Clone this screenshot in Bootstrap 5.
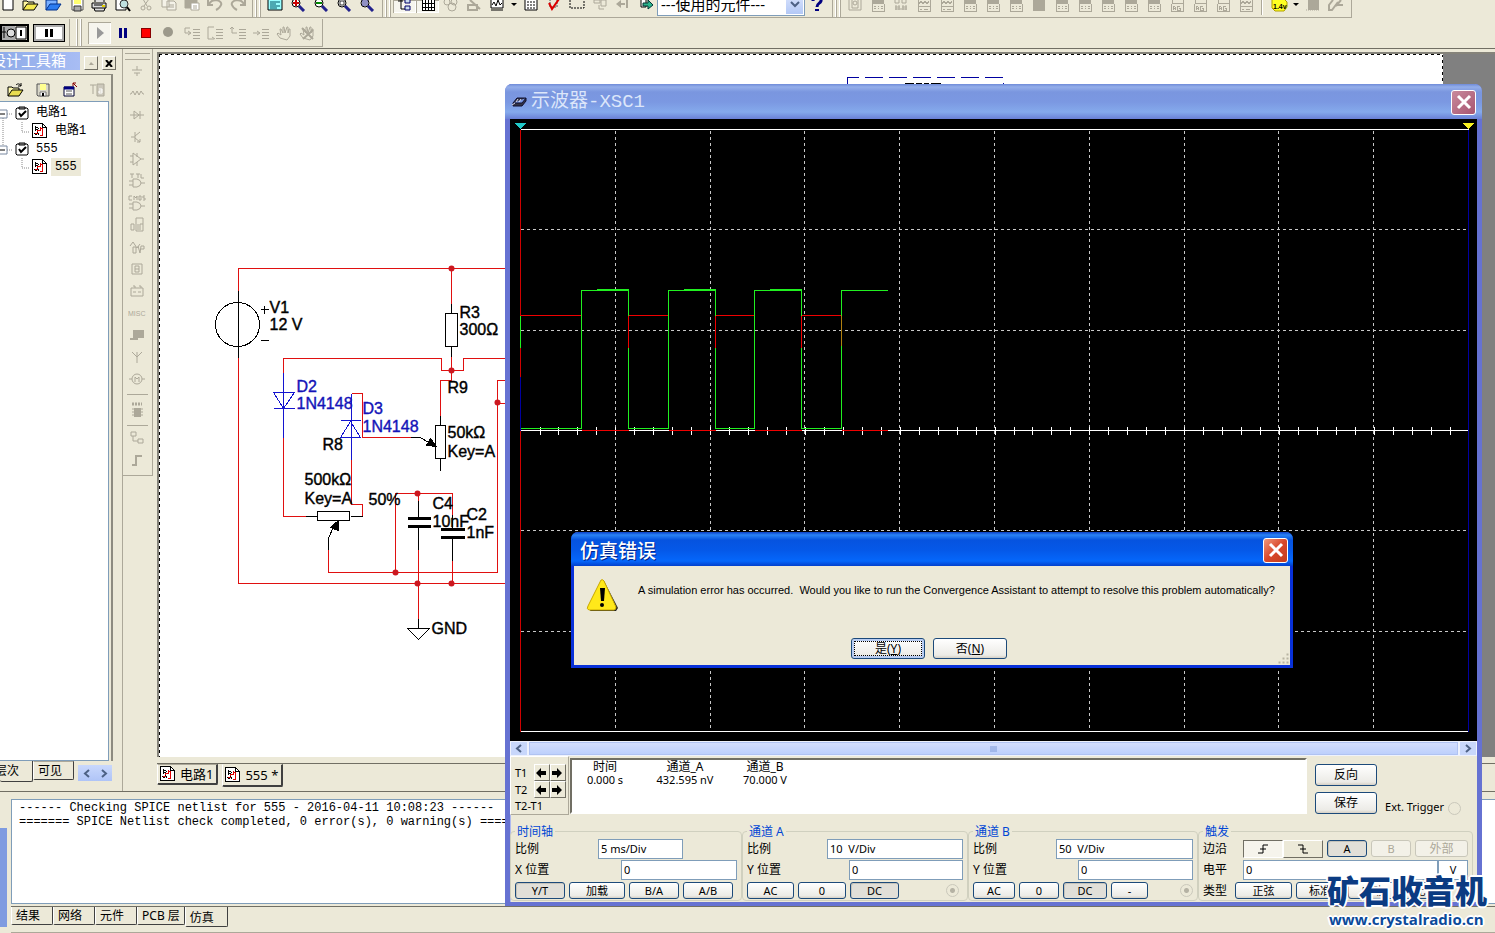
<!DOCTYPE html>
<html lang="zh-CN">
<head>
<meta charset="utf-8">
<meta name="viewport" content="width=device-width, initial-scale=1">
<title>555 - Multisim</title>
<link href="https://cdn.jsdelivr.net/npm/bootstrap@5.3.0/dist/css/bootstrap.min.css" rel="stylesheet">
<style>
:root{--face:#ece9d8;--dark:#716f64;--mid:#aca899;--field:#7f9db9;--ui:"Noto Sans","Noto Sans CJK SC",sans-serif;--song:"Liberation Mono","Noto Sans CJK SC",monospace}
body{height:100vh;overflow:hidden;background:var(--face);color:#000;font:12px/16px var(--ui)}
button,input,select{font:inherit;color:#000;border-radius:0}
svg{display:block;flex:none}
.strip-top{height:19px;overflow:hidden}
.strip-run{height:29px}
.bar{height:18px;border-right:1px solid var(--mid);border-bottom:1px solid var(--mid)}
.strip-run .bar{height:28px}
.bar-first{margin-left:-4px;padding-right:3px}
.grip{width:10px;align-self:stretch;flex:none;background:linear-gradient(90deg,transparent 2px,#fff 2px 3px,var(--mid) 3px 4px,transparent 4px 6px,#fff 6px 7px,var(--mid) 7px 8px,transparent 8px)}
.tool{width:23px;height:22px;flex:none;padding:0;border:0;background:none;display:flex;justify-content:center;align-items:center}
.strip-top .tool{height:13px;align-items:flex-start}
.tool.down{background:#f6f5ee;box-shadow:inset 1px 1px var(--mid),inset -1px -1px #fff}
.caret-tiny{width:11px}
.off{color:var(--mid)}
.parts-pick{width:148px;height:26px;margin-top:-10px;border:1px solid var(--field);background:#fff}
.parts-pick select{appearance:none;border:0;background:none;font:15px/22px var(--ui);padding:2px 3px 0;min-width:0}
.drop{width:17px;background:linear-gradient(#dfe8fe,#b3c8f6);margin:1px}
.vline{width:2px;height:15px;background:linear-gradient(90deg,var(--mid) 1px,#fff 1px)}
.toggle-box{height:18px;border:2px solid #000;background:#d4d0c8;padding:0}
.toggle-box.pause{width:32px;border-width:1px;box-shadow:inset 0 0 0 2px #aaa;background:#fff}
.main-area{border-top:1px solid var(--dark);min-height:0}
.dock{width:123px;border-right:1px solid var(--mid);padding-top:3px}
.dock-title{width:80px;height:18px;background:linear-gradient(90deg,#8fabe8,#a8bdf4);color:#fff;font-size:15px;line-height:17px;overflow:hidden;white-space:nowrap}
.dock-title span{margin-left:-9px}
.small-btn{width:14px;height:14px;padding:0;background:var(--face);border:1px solid;border-color:#fff var(--dark) var(--dark) #fff;display:flex;align-items:center;justify-content:center}
.dock-body{width:113px;border-right:2px solid #8d8b80;border-top:1px solid #8d8b80;margin-top:4px;padding-right:2px;min-height:0}
.tree{background:#fff;border:1px solid var(--field);border-left:0;padding-top:2px;font:12px/18px var(--song)}
.tree li{height:18px;display:flex;align-items:center;gap:3px}
.tree .picked{background:var(--face);padding:0 4px}
.dock-tabs{height:26px}
.dock-tabs,.doc-tabs,.out-tabs{font-size:12px}
.tabby{background:var(--face);border:1px solid;border-color:var(--mid) #404040 #404040 #fff;padding:0 6px;border-radius:0 0 2px 2px;white-space:nowrap;display:flex;align-items:center;gap:4px}
.scroller{width:34px;height:16px;background:linear-gradient(#c9d8fc,#afc4f7);border:0;padding:0}
.parts{width:30px;height:427px;border-right:1px solid var(--mid);border-bottom:1px solid var(--mid);padding-top:4px}
.parts .lines{height:7px;border-top:1px solid var(--mid);border-bottom:1px solid var(--mid);margin:0 2px}
.parts .tool{width:28px}
.parts hr{margin:1px 4px;opacity:1;color:var(--mid);border-top:1px solid}
.work{margin-left:4px;min-width:0}
.sheet-row{border-top:2px solid #85837a;border-left:2px solid #85837a;min-height:0;margin-top:3px}
.sheet{background:repeating-linear-gradient(90deg,#000 0 3px,#fff 3px 6px) top/100% 1px no-repeat,repeating-linear-gradient(#000 0 3px,#fff 3px 6px) left/1px 100% no-repeat,repeating-linear-gradient(#000 0 3px,#fff 3px 6px) right/1px 100% no-repeat,#fff;min-width:0;overflow:hidden}
.beyond{width:52px;background:#808080}
.doc-tabs{border-top:1px solid var(--dark);margin-top:6px;height:28px}
.doc-tabs .tabby{height:21px;font:13px/18px var(--ui);border-width:1px 2px 2px 1px;padding:0 3px 0 2px}
.doc-tabs .cur{height:23px;border-top-color:var(--face)}
.output{height:142px;border-top:1px solid var(--dark)}
.output .edge{width:7px;margin-top:36px;height:99px;background:#7f9be0}
.log{margin:7px 0 0 4px;height:105px;border:1px solid var(--field);border-right:0;background:#fff;padding:1px 7px;font:12px/14px var(--song);white-space:pre;overflow:hidden}
.out-tabs{border-top:1px solid var(--dark);margin:2px 0 0 4px;height:27px;border-bottom:1px solid var(--mid)}
.out-tabs .tabby{height:18px;padding:0 12px 0 4px;border-top:0}
.out-tabs .cur{height:20px;padding:3px 13px 0 4px}
.out-tabs .tight{padding-right:4px}
svg text{font-family:"Liberation Sans",Arial,sans-serif;font-size:16px}
.marks text{stroke-width:.4px}
.scope{position:absolute;left:505px;top:84px;width:977px;height:822px;border:5px solid #6672d2;border-top:0;border-bottom-width:4px;border-radius:7px 7px 0 0;background:var(--face);box-shadow:inset 1px 0 #aeb9ef}
.scope-title{height:35px;margin:0 -5px;padding:1px 6px 0 6px;border-radius:7px 7px 0 0;background:linear-gradient(#6f8bd8,#94aeea 3px,#7a96df 8px,#7b98e2 18px,#85aaec 28px,#6a80d6);color:#dce6fa;font:19px/34px var(--song)}
.xp-close{width:25px;height:25px;border:1px solid #fff;border-radius:3px;padding:0;display:flex;align-items:center;justify-content:center;background:linear-gradient(135deg,#c98a9c,#a75571)}
.xp-close.hot{background:linear-gradient(135deg,#f0977c,#d9482a 50%,#c33d1d)}
.screen{height:622px;background:#000;border:1px solid #000;overflow:hidden}
.hbar{height:15px;background:#eef2fd;padding:1px}
.hbar button{width:16px;border:0;padding:0;background:#c8d7fb;display:flex;align-items:center;justify-content:center}
.hbar .thumb{border:1px solid #b0c3f2;background:linear-gradient(#d3defe,#bdd0fc);margin:0 2px}
.cursor-box{width:59px;height:59px;border:1px solid;border-color:#fff var(--mid) var(--mid) #fff;padding:7px 2px 0 4px;font-size:11px}
.nudge{width:16px;height:17px;padding:0;background:var(--face);border:1px solid;border-color:#fff var(--dark) var(--dark) #fff}
.readout{height:56px;border:2px solid;border-color:var(--dark) #fff #fff var(--dark);background:#fff;margin:2px 0 0 1px}
.readout th,.readout td{width:66px;padding:0;font-weight:400;text-align:center;line-height:13px;font-size:11px;white-space:nowrap}
.readout th:nth-child(2){width:94px}
.readout th{font-size:12px}
.side-btns{padding-top:8px;margin-left:8px;gap:6px}
.xbtn{height:17px;padding:0;border:1px solid #1c4a7a;border-radius:3px;background:linear-gradient(#fff,#ecebe6 85%,#d6d0c5);font-size:11px;line-height:13px;text-align:center;white-space:nowrap;overflow:hidden;flex:none}
.xbtn.on{background:#e1dfd8;box-shadow:inset 1px 1px #c5c3ba}
.xbtn:disabled{border-color:#c9c7ba;color:var(--mid);background:#f3f1e8}
.xbtn.tall{height:22px;width:62px;font-size:12px;line-height:18px}
.ext-line{font-size:11px;padding:6px 16px 0 8px}
.group{border:1px solid #d0d0bf;border-radius:4px;padding:0 4px;margin:8px 0 0;height:70px;position:relative;min-width:0}
.group legend{position:absolute;top:-8px;left:4px;width:auto;float:none;margin:0;padding:0 2px;font-size:12px;line-height:16px;color:#0046d5;background:var(--face)}
.line{display:flex;align-items:center;height:21px}
.line:first-of-type{margin-top:6px}
.line label{width:83px;flex:none;white-space:nowrap}
.fieldy{height:20px;border:1px solid var(--field);background:#fff;padding:0 2px;font-size:11px;min-width:0}
.w-time{width:232px}.w-a{width:226px}.w-b{width:230px}
.w-a .line label{width:80px}
.dotty{appearance:none;width:13px;height:13px;border:1px solid #cac8bb;border-radius:50%;margin:0;flex:none}
.dotty:checked{background:radial-gradient(#b5b2a4 2px,transparent 3px)}
.edgebtn{width:40px;height:18px;padding:0;border:1px solid;border-color:#fff var(--dark) var(--dark) #fff;background:var(--face);display:flex;align-items:center;justify-content:center}
.edgebtn.on{border-color:var(--dark) #fff #fff var(--dark);background:#f6f4ec}
.alert-win{position:absolute;left:571px;top:532px;width:722px;height:136px;border:3px solid #0831d9;border-top:0;border-radius:7px 7px 0 0;background:var(--face);display:flex;flex-direction:column}
.alert-title{height:34px;margin:0 -3px;padding:2px 5px 0 9px;border-radius:7px 7px 0 0;background:linear-gradient(#0a3fc8,#2b83f5 3px,#0653df 8px,#0558e8 18px,#0567fb 29px,#0340cc);color:#fff;font:500 19px/30px "Noto Sans CJK SC",sans-serif;text-shadow:1px 1px #00248a}
.alert-msg{font:11px/16px "Liberation Sans",Arial,sans-serif;padding-left:18px;padding-top:16px;white-space:pre}
.alert-btns{padding:0 6px 6px 0}
.alert-win .xbtn{width:74px;height:21px;border-radius:3px;font-size:12px;line-height:18px}
.alert-win .focus{outline:1px dotted #000;outline-offset:-4px;box-shadow:inset 0 0 0 2px #b9cdf2}
.sitemark{position:absolute;left:1327px;top:867px;color:#0b3b82;white-space:nowrap;text-shadow:2px 0 #fff,-2px 0 #fff,0 2px #fff,0 -2px #fff,1px 1px #fff,-1px -1px #fff,1px -1px #fff,-1px 1px #fff}
.sitemark b{display:block;font:900 32px/44px "Noto Sans CJK SC",sans-serif}
.sitemark a{display:block;color:#0b4a9a;text-decoration:none;font:700 15px/17px "Open Sans",sans-serif;padding-left:2px}
</style>
</head>
<body class="d-flex flex-column">
<svg width="0" height="0" class="position-absolute" aria-hidden="true">
<defs>
<symbol id="folder" viewBox="0 0 17 16"><path d="M1 14V5h4l1 1h6v2" fill="#fffbb0" stroke="#000"/><path d="M1 14l4-6h11l-4 6z" fill="#e8dc50" stroke="#000"/><path d="M9 3c2-2 4-1 5 1m0-3v3h-3" fill="none" stroke="#000"/></symbol>
<symbol id="disk" viewBox="0 0 16 16"><path d="M2 2h12v12H3l-1-1z" fill="#d8d6c8" stroke="#555"/><path d="M5 2h6v6H5z" fill="#ffff90"/><path d="M5 10h6v4H5z" fill="#fff" stroke="#777"/><path d="M7 11h2v3H7z" fill="#000"/></symbol>
<symbol id="sheetic" viewBox="0 0 16 16"><g shape-rendering="crispEdges" transform="translate(.5 .5)"><path d="M0 0h10l4 4v10H0z" fill="#fff" stroke="#000"/><path d="M10 0v4h4" fill="none" stroke="#000"/><path d="M2 10h3V7h3V3M8 5h2v7H7" fill="none" stroke="#d00"/><path d="M3 3v4l3-2zM5 12l-3-2M5 9l2 3" fill="none" stroke="#000"/></g></symbol>
<symbol id="clip" viewBox="0 0 14 14"><path d="M2 2h10l1 1v9l-1 1H2l-1-1V3z" fill="#fff" stroke="#000"/><path d="M4 1h6v2H4z" fill="#999" stroke="#000"/><path d="M4 7l2 3 5-5" fill="none" stroke="#000" stroke-width="2"/></symbol>
<symbol id="cut-lens" viewBox="0 0 16 12"><circle cx="6" cy="3" r="4" fill="#fff" stroke="#000"/><path d="M9 6l5 5" stroke="#22228c" stroke-width="3"/></symbol>
<symbol id="meter" viewBox="0 0 16 12"><g shape-rendering="crispEdges"><path d="M2 0h12v4H2z" fill="#aca899"/><path d="M2 4v7h12V4M4 6h2m2 0h1m2 0h2M4 8h2m2 0h1m2 0h2" fill="none" stroke="#aca899"/></g></symbol>
<symbol id="graphm" viewBox="0 0 16 12"><g shape-rendering="crispEdges"><path d="M2 0v11h12V0M3 4l2-3 2 3 2-3 2 3 2-3M3 6h11M4 9h2m2 0h4" fill="none" stroke="#aca899"/></g></symbol>
<symbol id="agm" viewBox="0 0 16 12"><g shape-rendering="crispEdges"><path d="M3 0v3h11V0M2 4v7h12V4M4 10V7l1-1 1 1v3M4 8h2m5-2H8v4h3V8h-1" fill="none" stroke="#aca899"/></g></symbol>
<symbol id="lines" viewBox="0 0 18 16"><path shape-rendering="crispEdges" d="M10 4h7M10 7h7M10 10h7M10 13h7" stroke="#aca899"/></symbol>
<symbol id="lt" viewBox="0 0 8 9"><path d="M6 1L2 4.500L6 8" fill="none" stroke="#4d6185" stroke-width="2"/></symbol>
<symbol id="rt" viewBox="0 0 8 9"><path d="M2 1l4 3.500L2 8" fill="none" stroke="#4d6185" stroke-width="2"/></symbol>
<symbol id="ex" viewBox="0 0 16 16"><path d="M2 2l12 12M14 2L2 14" stroke="#fff" stroke-width="3"/></symbol>
<symbol id="al" viewBox="0 0 12 12"><path d="M1 6l5-5v3h5v4H6v3z"/></symbol>
<symbol id="ar" viewBox="0 0 12 12"><path d="M11 6L6 1v3H1v4h5v3z"/></symbol>
</defs>
</svg>

<header>
<div class="strip-top d-flex">
  <div class="bar bar-first d-flex">
    <button class="tool" aria-label="新建"><svg width="16" height="12"><path d="M3-1v11h10V-1z" fill="#fff" stroke="#000"/></svg></button>
    <button class="tool" aria-label="打开"><svg width="17" height="12"><path d="M1 10V1h4l1 1h6v2" fill="#fff8a0" stroke="#000"/><path d="M1 10l4-6h11l-4 6z" fill="#f5ea50" stroke="#000"/></svg></button>
    <button class="tool" aria-label="打开范例"><svg width="17" height="12"><path d="M1 10V0h11v4" fill="#7ab0ff" stroke="#00308c"/><path d="M1 10l4-6h11l-4 6z" fill="#2c7cf0" stroke="#00308c"/></svg></button>
    <button class="tool" aria-label="保存"><svg width="16" height="12"><path d="M3-1h11v11H3z" fill="#fff" stroke="#555"/><path d="M5 0h7v4H5z" fill="#ffff70"/><path d="M5 6h7v5H5z" fill="#aaa" stroke="#333"/></svg></button>
    <button class="tool" aria-label="打印"><svg width="17" height="12"><path d="M4 2V-1h9v3M1 3h14v5H1zM3 8l1 3h9l1-3" fill="#ddd" stroke="#000"/><path d="M3 5h9" stroke="#000"/><path d="M11 6h3" stroke="#e0d000" stroke-width="2"/></svg></button>
    <button class="tool" aria-label="打印预览"><svg width="16" height="12"><path d="M1-1v11h10V-1z" fill="#fff" stroke="#000"/><circle cx="9" cy="4" r="4" fill="#bfe0e0" stroke="#333"/><path d="M12 7l3 4" stroke="#000" stroke-width="2"/></svg></button>
    <button class="tool off" aria-label="剪切"><svg width="16" height="12" fill="none" stroke="currentColor"><path d="M5-1l4 7M11-1L6 6"/><circle cx="5" cy="8" r="2"/><circle cx="11" cy="8" r="2"/></svg></button>
    <button class="tool off" aria-label="复制"><svg width="16" height="12" fill="#f4f2e8" stroke="currentColor"><path d="M1-1v8h7V-1zM6 1v9h9V3l-2-2zM8 5h5M8 7h5"/></svg></button>
    <button class="tool off" aria-label="粘贴"><svg width="16" height="12" stroke="currentColor"><path d="M1-1v9h12v-9z" fill="currentColor"/><path d="M7 3v7h8V3z" fill="#fff"/><path d="M9 6h4M9 8h4"/></svg></button>
    <button class="tool off" aria-label="撤消"><svg width="16" height="12" fill="none" stroke="currentColor" stroke-width="2"><path d="M1 0v5h5M2 4c4-7 14-3 12 1-1 3-3 4-5 5"/></svg></button>
    <button class="tool off" aria-label="重做"><svg width="16" height="12" fill="none" stroke="currentColor" stroke-width="2"><path d="M15 0v5h-5M14 4C10-3 0 1 2 5c1 3 3 4 5 5"/></svg></button>
  </div>
  <div class="bar d-flex pe-1"><span class="grip"></span>
    <button class="tool" aria-label="整页"><svg width="16" height="12"><path d="M1-1v11h14V-1z" fill="#9ff" stroke="#000"/><path d="M3 2h10M3 4h6M3 6h10M3 8h7" stroke="#056"/></svg></button>
    <button class="tool" aria-label="放大"><svg width="16" height="12"><use href="#cut-lens"/><path d="M3 3h6M6 0v6" stroke="#c00" stroke-width="2"/></svg></button>
    <button class="tool" aria-label="缩小"><svg width="16" height="12"><use href="#cut-lens"/><path d="M3 3h6" stroke="#080" stroke-width="2"/></svg></button>
    <button class="tool" aria-label="缩放区域"><svg width="16" height="12"><use href="#cut-lens"/><path d="M4 1h4v4H4z" fill="none" stroke="#333"/></svg></button>
    <button class="tool" aria-label="缩放到页"><svg width="16" height="12"><use href="#cut-lens"/><path d="M4 0v6M6 0v6M8 0v6" stroke="#228"/></svg></button>
  </div>
  <div class="bar d-flex pe-1"><span class="grip"></span>
    <button class="tool down" aria-label="设计工具箱"><svg width="16" height="12" fill="none" stroke="#000"><path d="M1 1h5M4 0v9h4"/><path d="M8-1h5v4H8zM8 6h5v4H8z" fill="#cde" stroke="#006"/></svg></button>
    <button class="tool down" aria-label="电子表格"><svg width="16" height="12" shape-rendering="crispEdges"><path d="M2 0v10h12V0M2 3h12M2 7h12M5 0v10M8 0v10M11 0v10" fill="#fff" stroke="#000"/></svg></button>
    <button class="tool off" aria-label="数据库"><svg width="16" height="12" fill="none" stroke="currentColor"><circle cx="4" cy="2" r="3"/><circle cx="11" cy="2" r="3"/><circle cx="9" cy="7" r="4"/></svg></button>
    <button class="tool off" aria-label="新建元件"><svg width="16" height="12" fill="none" stroke="currentColor"><path d="M2 5h9v5H2zM4 0l10 9" stroke-width="2"/></svg></button>
    <button class="tool" aria-label="图形"><svg width="16" height="12"><path d="M2-1v9h12V-1z" fill="#fff" stroke="#000"/><path d="M3 5l2-3 2 4 2-6 2 5 2-2M2 10h12" fill="none" stroke="#000"/></svg></button>
    <button class="tool caret-tiny" aria-label="分析"><svg width="6" height="12"><path d="M0 3h6L3 6z"/></svg></button>
    <button class="tool" aria-label="后处理"><svg width="16" height="12"><path d="M2-1v11h12V-1z" fill="#fff" stroke="#000"/><path d="M4 2h8M4 5h8M4 8h8" stroke="#000" stroke-dasharray="2 1"/></svg></button>
    <button class="tool" aria-label="规则检查"><svg width="16" height="12"><path d="M4-1v8h7V-1" fill="none" stroke="#555" stroke-dasharray="2 1"/><path d="M3 3l3 6L13-1" fill="none" stroke="#d00" stroke-width="2"/></svg></button>
    <button class="tool" aria-label="捕捉区域"><svg width="16" height="12"><path d="M1 0v8h14V0" fill="none" stroke="#000" stroke-dasharray="2 1"/></svg></button>
    <button class="tool off" aria-label="转到父图"><svg width="16" height="12" fill="none" stroke="currentColor"><path d="M2 0h6v3H2zM9 0h5v6H9zM7 5v4h5"/></svg></button>
    <button class="tool off" aria-label="反注释"><svg width="16" height="12" fill="currentColor"><path d="M1 4l5-4v3h4v2H6v3zM11 0h2v8h-2z"/></svg></button>
    <button class="tool" aria-label="正注释"><svg width="16" height="12"><path d="M3-1v8h5V-1z" fill="#fff" stroke="#000"/><path d="M5 3h5V0l5 5-5 4V6H5z" fill="#2cb58c" stroke="#033"/></svg></button>
    <div class="parts-pick d-flex"><select class="flex-fill" aria-label="使用的元件"><option>---使用的元件---</option></select><span class="drop d-flex align-items-end justify-content-center pb-1"><svg width="10" height="9"><path d="M1 1l4 4 4-4" fill="none" stroke="#4d6185" stroke-width="2"/></svg></span></div>
    <button class="tool" aria-label="帮助"><svg width="16" height="12"><path d="M4 1c0-5 9-4 8 0-1 3-4 2-4 6" fill="none" stroke="#000080" stroke-width="3"/><path d="M6 9h4v2H6z" fill="#000080"/></svg></button>
  </div>
  <div class="bar d-flex"><span class="grip"></span>
    <button class="tool off" aria-label="万用表"><svg width="16" height="12" fill="none" stroke="currentColor"><path d="M2-1v11h12V-1M5 0v8h6V0"/><circle cx="8" cy="3" r="2"/></svg></button>
    <button class="tool" aria-label="函数发生器"><svg width="16" height="12"><use href="#meter"/></svg></button>
    <button class="tool off" aria-label="瓦特表"><svg width="16" height="12" fill="none" stroke="currentColor"><path d="M2-1v4h4V-1M9-1v4h4V-1M2 7h5M9 7h5M3 5v5M6 5v5M10 5v5M13 5v5M2 9h12"/></svg></button>
    <button class="tool" aria-label="示波器"><svg width="16" height="12"><use href="#graphm"/></svg></button>
    <button class="tool" aria-label="四通道示波器"><svg width="16" height="12"><use href="#graphm"/></svg></button>
    <button class="tool" aria-label="波特图仪"><svg width="16" height="12"><use href="#meter"/></svg></button>
    <button class="tool" aria-label="频率计"><svg width="16" height="12"><use href="#meter"/></svg></button>
    <button class="tool" aria-label="字发生器"><svg width="16" height="12"><use href="#meter"/></svg></button>
    <button class="tool off" aria-label="逻辑分析仪"><svg width="16" height="12"><path d="M2-1h12v12H2z" fill="currentColor"/></svg></button>
    <button class="tool" aria-label="逻辑转换仪"><svg width="16" height="12"><use href="#meter"/></svg></button>
    <button class="tool" aria-label="IV分析仪"><svg width="16" height="12"><use href="#meter"/></svg></button>
    <button class="tool" aria-label="失真分析仪"><svg width="16" height="12"><use href="#meter"/></svg></button>
    <button class="tool" aria-label="频谱分析仪"><svg width="16" height="12"><use href="#meter"/></svg></button>
    <button class="tool" aria-label="网络分析仪"><svg width="16" height="12"><use href="#meter"/></svg></button>
    <button class="tool" aria-label="安捷伦信号源"><svg width="16" height="12"><use href="#agm"/></svg></button>
    <button class="tool" aria-label="安捷伦万用表"><svg width="16" height="12"><use href="#agm"/></svg></button>
    <button class="tool" aria-label="安捷伦示波器"><svg width="16" height="12"><use href="#agm"/></svg></button>
    <button class="tool" aria-label="泰克示波器"><svg width="16" height="12"><use href="#graphm"/></svg></button>
    <span class="vline mx-1"></span>
    <button class="tool" aria-label="测量探针"><svg width="18" height="12"><path d="M2-1h12l3 3v5l-3 4H5L2 8z" fill="#ff2" stroke="#b0a000"/><text x="3" y="9" style="font-size:7px;font-weight:700">1.4v</text></svg></button>
    <button class="tool caret-tiny" aria-label="探针类型"><svg width="6" height="12"><path d="M0 3h6L3 6z"/></svg></button>
    <button class="tool off" aria-label="LabVIEW"><svg width="16" height="12"><path d="M3-1h11v11H3z" fill="currentColor"/><path d="M1 10h14" stroke="currentColor" stroke-dasharray="1 1"/></svg></button>
    <button class="tool off me-1" aria-label="电流探针"><svg width="17" height="12" fill="none" stroke="currentColor"><path d="M6 0L2 5v5h3l6-8M9 6l5-6M9 5h7" stroke-width="2"/></svg></button>
  </div>
</div>
<div class="strip-run d-flex">
  <div class="bar d-flex align-items-center pe-1 gap-1">
    <button class="toggle-box" aria-label="仿真开关"><svg width="25" height="14"><path d="M0 0h13v14H0z" fill="#aaa"/><path d="M2 1v11M0 6h4" stroke="#000"/><circle cx="9" cy="7" r="4" fill="#ddd" stroke="#000"/><path d="M14 1h10v12H14z" fill="#fff" stroke="#000"/><path d="M19 4v6" stroke="#000" stroke-width="2"/></svg></button>
    <button class="toggle-box pause d-flex align-items-center justify-content-center" aria-label="暂停仿真"><svg width="8" height="8"><path d="M0 0h3v8H0zM5 0h3v8H5z"/></svg></button>
  </div>
  <div class="bar d-flex align-items-center ps-1"><span class="grip me-1"></span>
    <button class="tool down" aria-label="运行"><svg width="10" height="12"><path d="M2 0l7 6-7 6z" fill="#999"/></svg></button>
    <button class="tool" aria-label="暂停"><svg width="8" height="10"><path d="M0 0h3v10H0zM5 0h3v10H5z" fill="#000080"/></svg></button>
    <button class="tool" aria-label="停止"><svg width="10" height="10"><path d="M0 0h10v10H0z" fill="#800"/><path d="M1 1h8v8H1z" fill="#f00"/></svg></button>
    <button class="tool" aria-label="断点"><svg width="11" height="11"><circle cx="5" cy="5" r="5" fill="#9c998b"/></svg></button>
    <button class="tool" aria-label="步入"><svg width="18" height="16"><use href="#lines"/><path d="M7 3H2v5h5M5 6l3 2-3 2" fill="none" stroke="#aca899"/></svg></button>
    <button class="tool" aria-label="步过"><svg width="18" height="16"><use href="#lines"/><path d="M8 2H2v12h6M6 12l3 2" fill="none" stroke="#aca899"/></svg></button>
    <button class="tool" aria-label="步出"><svg width="18" height="16"><use href="#lines"/><path d="M3 2v6h5M1 4l2-2 2 2" fill="none" stroke="#aca899"/></svg></button>
    <button class="tool" aria-label="运行到光标"><svg width="18" height="16"><use href="#lines"/><path d="M1 8h6M5 6l3 2-3 2" fill="none" stroke="#aca899"/></svg></button>
    <button class="tool off" aria-label="手动断点"><svg width="16" height="16" fill="none" stroke="currentColor"><path d="M4 13L1 9l1-1 3 2-1-6h1l2 4V2h1l1 6 2-6h1v6l1-4h1v7l-3 4z"/></svg></button>
    <button class="tool off me-1" aria-label="清除断点"><svg width="16" height="16" fill="none" stroke="currentColor"><path d="M4 13L1 9l1-1 3 2-1-6h1l2 4V2h1l1 6 2-6h1v6l1-4h1v7l-3 4z"/><path d="M3 3l11 11M14 5L4 14" stroke-width="2"/></svg></button>
  </div>
</div>
</header>

<main class="main-area d-flex flex-fill">
  <aside class="dock d-flex flex-column flex-shrink-0">
    <div class="d-flex"><div class="dock-title"><span>设计工具箱</span></div>
      <button class="small-btn ms-1 mt-1" aria-label="收起"><svg width="5" height="3"><path d="M0 3h5L2 0z" fill="#aca899"/></svg></button>
      <button class="small-btn ms-1 mt-1" aria-label="关闭"><svg width="8" height="7"><path d="M1 0l6 7M7 0L1 7" stroke="#000" stroke-width="2"/></svg></button></div>
    <div class="dock-body d-flex flex-column flex-fill">
      <div class="d-flex ps-1 pt-1 gap-1"><button class="tool" aria-label="打开"><svg width="17" height="16"><use href="#folder"/></svg></button><button class="tool" aria-label="保存"><svg width="16" height="16"><use href="#disk"/></svg></button><button class="tool" aria-label="关闭设计"><svg width="16" height="16"><path d="M2 5h10v9H2z" fill="#fff" stroke="#003"/><path d="M2 6h10" stroke="#000080" stroke-width="3"/><path d="M4 9h6M4 12h6" stroke="#555"/><path d="M15 5l-4-4m0 3V1h3" fill="none" stroke="#800"/></svg></button><button class="tool off" aria-label="重命名"><svg width="16" height="16" fill="none" stroke="currentColor"><path d="M1 3h6M4 3v9"/><path d="M8 2h7v12H8z" fill="#ccc8bb"/><path d="M10 7h3v4h-3V9h3" stroke="#fff"/></svg></button></div>
      <ul class="tree list-unstyled mb-0 flex-fill">
        <li><svg width="12" height="18"><path d="M3 14v4M7 10h5" stroke="#888" stroke-dasharray="1 1"/><path d="M-2 6h9v8h-9z" fill="#fff" stroke="#7888a0"/><path d="M0 10h5" stroke="#000"/></svg><svg width="14" height="14"><use href="#clip"/></svg><span class="ps-1">电路1</span></li>
        <li><svg width="29" height="18"><path d="M3 0v18M22 0v10h7" fill="none" stroke="#888" stroke-dasharray="1 1"/></svg><svg width="16" height="16"><use href="#sheetic"/></svg><span class="ps-1">电路1</span></li>
        <li><svg width="12" height="18"><path d="M3 0v6M7 10h5" stroke="#888" stroke-dasharray="1 1"/><path d="M-2 6h9v8h-9z" fill="#fff" stroke="#7888a0"/><path d="M0 10h5" stroke="#000"/></svg><svg width="14" height="14"><use href="#clip"/></svg><span class="ps-1">555</span></li>
        <li><svg width="29" height="18"><path d="M22 0v10h7" fill="none" stroke="#888" stroke-dasharray="1 1"/></svg><svg width="16" height="16"><use href="#sheetic"/></svg><span class="picked">555</span></li>
      </ul>
    </div>
    <div class="dock-tabs d-flex mb-1">
      <button class="tabby border-start-0 border-top-0 ps-0" style="width:33px;height:21px"><span style="margin-left:-5px">层次</span></button><button class="tabby mb-1 px-1" style="width:41px;height:19px">可见</button>
      <button class="scroller ms-1 mt-1 d-flex justify-content-around align-items-center" aria-label="滚动标签"><svg width="8" height="9"><use href="#lt"/></svg><svg width="8" height="9"><use href="#rt"/></svg></button>
    </div>
  </aside>
  <div class="parts flex-shrink-0">
    <div class="lines"></div>
    <button class="tool off" aria-label="电源"><svg width="14" height="12" fill="none" stroke="currentColor"><path d="M7 1v4M2 5h10M4 8h6M7 8v3"/></svg></button>
    <button class="tool off" aria-label="基本"><svg width="14" height="8" fill="none" stroke="currentColor"><path d="M0 5h1l2-3 2 4 2-4 2 4 2-4 2 3h1"/></svg></button>
    <button class="tool off" aria-label="二极管"><svg width="14" height="12" fill="none" stroke="currentColor"><path d="M0 6h14M4 2v8l5-4zM10 2v8"/></svg></button>
    <button class="tool off" aria-label="晶体管"><svg width="14" height="14" fill="none" stroke="currentColor"><path d="M1 7h4M5 2v10M5 6l5-4M5 8l5 4h-3m3 0V9"/></svg></button>
    <button class="tool off" aria-label="模拟"><svg width="16" height="14" fill="none" stroke="currentColor"><path d="M4 1v12l8-6zM1 4h3M1 10h3M12 7h3M8 1v4M8 10v4"/></svg></button>
    <button class="tool off" aria-label="TTL"><svg width="18" height="16" fill="none" stroke="currentColor"><path d="M2 1h4M4 1v4M8 1h4M10 1v4M13 1v4h3M5 6h4q4 1 4 4t-4 4H5zM1 8h4M1 12h4M13 10h4"/></svg></button>
    <button class="tool off" aria-label="CMOS"><svg width="18" height="16" fill="none" stroke="currentColor"><path d="M4 1H1v4h3M6 5V1l2 2 1-2v4M11 1h2v4h-2zM17 1h-2v2h2v2h-2M5 7h4q4 1 4 4t-4 4H5zM1 9h4M1 13h4M13 11h4"/></svg></button>
    <button class="tool off" aria-label="其他数字"><svg width="16" height="16" fill="none" stroke="currentColor"><path d="M7 1h7v13H7zM2 7h3v6H2zM9 7v6m2 0V7h3"/></svg></button>
    <button class="tool off" aria-label="混合"><svg width="16" height="14" fill="none" stroke="currentColor"><path d="M1 6l3-4 4 6 3-4M4 7h3v6H4zM9 6l2 7 1-7h3v3h-3"/></svg></button>
    <button class="tool off" aria-label="指示器"><svg width="12" height="12" fill="none" stroke="currentColor"><path d="M1 1h10v10H1zM4 3h4v6H4zM4 6h4"/></svg></button>
    <button class="tool off" aria-label="功率"><svg width="14" height="12" fill="none" stroke="currentColor"><path d="M1 3h12v8H1zM3 1h2v2M9 1h2v2M3 7h3M8 7h3"/></svg></button>
    <button class="tool off" aria-label="杂项"><svg width="18" height="8"><text x="0" y="7" fill="currentColor" style="font-size:7px">MISC</text></svg></button>
    <button class="tool off" aria-label="外设"><svg width="16" height="12"><path d="M4 1h11v8H4zM1 9h8v2H1z" fill="currentColor"/></svg></button>
    <button class="tool off" aria-label="射频"><svg width="12" height="12" fill="none" stroke="currentColor"><path d="M6 1v11M1 1l5 5 5-5"/></svg></button>
    <button class="tool off" aria-label="机电"><svg width="16" height="12" fill="none" stroke="currentColor"><circle cx="8" cy="6" r="5"/><path d="M0 6h3M13 6h3M6 9V4l2 2 2-2v5"/></svg></button>
    <hr class="mt-1"><button class="tool off mt-1 mb-1" aria-label="MCU"><svg width="14" height="16"><path d="M2 2h10" stroke="currentColor" stroke-width="3" stroke-dasharray="2 1"/><path d="M4 6h7v9H4z" fill="currentColor"/><path d="M2 7h11M2 10h11M2 13h11" stroke="currentColor"/></svg></button><hr>
    <button class="tool off" aria-label="层次块"><svg width="14" height="14" fill="none" stroke="currentColor"><path d="M1 1h5v4H1zM8 8h5v4H8zM3 5v5h5"/></svg></button>
    <button class="tool off" aria-label="总线"><svg width="12" height="12" fill="none" stroke="currentColor" stroke-width="2"><path d="M1 11h4V2h6"/></svg></button>
  </div>
  <section class="work flex-fill d-flex flex-column">
    <div class="sheet-row d-flex flex-fill">
      <div class="sheet flex-fill">
<svg width="100%" height="100%" role="img" aria-label="555 电路图"><g transform="translate(-158.5 -53.5)" fill="none" shape-rendering="crispEdges">
<path d="M847 84v-7h156v7" stroke="#0000a0" stroke-dasharray="18 6"/>
<path d="M904 83h9m2 0h6m2 0h5m2 0h10" stroke="#000" stroke-width="2"/>
<g stroke="#e01010">
<path d="M238 290V268H506M238 357V583H506M451 268V303M451 356V370M283 372V358H441V370H463V358H506M451 370V380H440V415M283 437V516H305M351 459V504H362V516M351 393H362V437H410M328 549V572H497V380H506M497 403H506M395 572V493H452V514M418 493V500M418 549V618M452 559V583"/></g>
<g fill="#cc1820" shape-rendering="auto"><circle cx="451" cy="268" r="3"/><circle cx="451" cy="370" r="3"/><circle cx="497" cy="402" r="3"/><circle cx="417" cy="493" r="3"/><circle cx="395" cy="572" r="3"/><circle cx="417" cy="583" r="3"/><circle cx="451" cy="583" r="3"/></g>
<g stroke="#000"><circle cx="237" cy="324" r="22"/><path d="M238 290V357M260 309h8M264 305v8M260 340h8M451 303v10M451 346v10M445 313h12v33h-12zM440 415v10M440 458v12M435 425h10v33h-10zM305 516h12M350 516h12M317 511h32v9h-32zM328 549v-11l5-12M410 437h10l8 5M418 500v18M418 526v23M452 514v14M452 538v22M418 618v10M407 628h22l-11 11z"/><path d="M407 518h23M407 526h23M440 529h24M440 537h24" stroke-width="3"/><path d="M436 446l-10-1 4-7zM338 520l-8 7 8 3z" fill="#000"/></g>
<g stroke="#1414d0"><path d="M283 372V437M273 392h21l-11 16zM273 408h21M351 393V459M340 420h20M340 437h20l-10-16z"/></g>
<g class="marks" fill="#000" stroke="#000" shape-rendering="auto"><text x="269" y="312">V1</text><text x="269" y="329">12 V</text><text x="459" y="317">R3</text><text x="459" y="334">300Ω</text><text x="447" y="392">R9</text><text x="322" y="449">R8</text><text x="447" y="437">50kΩ</text><text x="447" y="456">Key=A</text><text x="304" y="484">500kΩ</text><text x="304" y="503">Key=A</text><text x="368" y="504">50%</text><text x="432" y="508">C4</text><text x="432" y="526">10nF</text><text x="466" y="519">C2</text><text x="466" y="537">1nF</text><text x="431" y="633">GND</text></g>
<g class="marks" fill="#1414b8" stroke="#1414b8" shape-rendering="auto"><text x="296" y="391">D2</text><text x="296" y="408">1N4148</text><text x="362" y="413">D3</text><text x="362" y="431">1N4148</text></g>
</g></svg>
      </div>
      <div class="beyond flex-shrink-0"></div>
    </div>
    <nav class="doc-tabs d-flex gap-1"><button class="tabby"><svg width="16" height="16"><use href="#sheetic"/></svg>电路1</button><button class="tabby cur"><svg width="16" height="16"><use href="#sheetic"/></svg>555 *</button></nav>
  </section>
</main>

<footer class="output d-flex flex-shrink-0">
  <div class="edge flex-shrink-0"></div>
  <div class="flex-fill overflow-hidden">
    <div class="log">------ Checking SPICE netlist for 555 - 2016-04-11 10:08:23 ------
======= SPICE Netlist check completed, 0 error(s), 0 warning(s) =======</div>
    <nav class="out-tabs d-flex"><button class="tabby">结果</button><button class="tabby">网络</button><button class="tabby">元件</button><button class="tabby tight">PCB 层</button><button class="tabby cur">仿真</button></nav>
  </div>
</footer>

<section class="scope d-flex flex-column" aria-label="示波器">
  <div class="scope-title d-flex align-items-center"><svg width="16" height="16" class="me-1"><path d="M2 9l4-5h9l-4 5zM2 9v3l9 0 4-5V4" fill="#334" stroke="#113"/><path d="M5 8l2-3M8 8l2-3M1 11l3-2" stroke="#dde"/></svg><span class="flex-fill">示波器-XSC1</span><button class="xp-close" aria-label="关闭"><svg width="16" height="16"><use href="#ex"/></svg></button></div>
  <div class="screen">
<svg width="100%" height="100%" role="img" aria-label="波形"><g transform="translate(-510.5 -119.5)" fill="none" shape-rendering="crispEdges">
<path d="M615 130V731M710 130V731M804 130V731M899 130V731M994 130V731M1089 130V731M1184 130V731M1278 130V731M1373 130V731M520 229H1468M520 330H1468M520 530H1468M520 631H1468" stroke="#c8c8c8" stroke-dasharray="3 3"/>
<path d="M520 129H1468M520 731H1468M520 430H1468" stroke="#fff"/><path d="M539 430H1468" stroke="#fff" stroke-width="8" stroke-dasharray="1 17.960"/>
<path d="M1468 129V731" stroke="#0000a0"/><path d="M520 129V731" stroke="#d00000"/><path d="M520 376V430" stroke="#0000a0"/>
<path d="M520 315H581M628 315H668M715 315H754M801 315H841M581 430H628M668 430H715M754 430H801M841 430H887" stroke="#f00000"/>
<path d="M520 315V347M520 428H581V290H628V428H668V290H715V428H754V290H801V428H841V290H887M596 289H628M683 289H715M769 289H801" stroke="#20f020"/>
<path d="M628 315v32M715 315v32M801 315v32" stroke="#f00000"/><path d="M841 315v30" stroke="#b08010"/>
<path d="M514 122h12l-6 7z" fill="#20c8c8"/><path d="M1462 122h12l-6 7z" fill="#f8f020"/>
</g></svg>
  </div>
  <div class="hbar d-flex"><button aria-label="向左"><svg width="8" height="9"><use href="#lt"/></svg></button><div class="thumb flex-fill d-flex align-items-center justify-content-center"><svg width="8" height="6"><path d="M0 0v6M2 0v6M4 0v6M6 0v6" stroke="#7f9ad8"/></svg></div><button aria-label="向右"><svg width="8" height="9"><use href="#rt"/></svg></button></div>
  <div class="d-flex">
    <div class="cursor-box flex-shrink-0">
      <div class="d-flex align-items-center"><span class="flex-fill">T1</span><button class="nudge" aria-label="T1 左移"><svg width="12" height="12"><use href="#al"/></svg></button><button class="nudge" aria-label="T1 右移"><svg width="12" height="12"><use href="#ar"/></svg></button></div>
      <div class="d-flex align-items-center"><span class="flex-fill">T2</span><button class="nudge" aria-label="T2 左移"><svg width="12" height="12"><use href="#al"/></svg></button><button class="nudge" aria-label="T2 右移"><svg width="12" height="12"><use href="#ar"/></svg></button></div>
      <div>T2-T1</div>
    </div>
    <div class="readout flex-fill"><table><thead><tr><th>时间</th><th>通道_A</th><th>通道_B</th></tr></thead><tbody><tr><td>0.000 s</td><td>432.595 nV</td><td>70.000 V</td></tr></tbody></table></div>
    <div class="side-btns d-flex flex-column"><button class="xbtn tall">反向</button><button class="xbtn tall">保存</button></div>
    <div class="ext-line d-flex align-items-end"><label for="ext" class="text-nowrap me-1">Ext. Trigger</label><input class="dotty mb-0" type="radio" id="ext" name="ext" disabled></div>
  </div>
  <div class="d-flex mt-1 pt-1 flex-fill">
    <fieldset class="group w-time flex-shrink-0"><legend>时间轴</legend>
      <div class="line"><label for="t1">比例</label><input class="fieldy" style="width:85px" id="t1" value="5 ms/Div"></div>
      <div class="line"><label for="t2">X 位置</label><input class="fieldy ms-auto" style="width:116px" id="t2" value="0"></div>
      <div class="line"><button class="xbtn on" style="width:50px">Y/T</button><button class="xbtn mx-1" style="width:56px">加载</button><button class="xbtn me-1" style="width:50px">B/A</button><button class="xbtn" style="width:50px">A/B</button></div>
    </fieldset>
    <fieldset class="group w-a flex-shrink-0"><legend>通道 A</legend>
      <div class="line"><label for="a1">比例</label><input class="fieldy flex-fill" id="a1" value="10  V/Div"></div>
      <div class="line"><label for="a2">Y 位置</label><input class="fieldy ms-auto" style="width:114px" id="a2" value="0"></div>
      <div class="line gap-1"><button class="xbtn" style="width:47px">AC</button><button class="xbtn" style="width:48px">0</button><button class="xbtn on" style="width:49px">DC</button><input class="dotty ms-auto me-1" type="radio" checked disabled aria-label="通道 A 端子"></div>
    </fieldset>
    <fieldset class="group w-b flex-shrink-0"><legend>通道 B</legend>
      <div class="line"><label for="b1">比例</label><input class="fieldy flex-fill" id="b1" value="50  V/Div"></div>
      <div class="line"><label for="b2">Y 位置</label><input class="fieldy ms-auto" style="width:115px" id="b2" value="0"></div>
      <div class="line gap-1"><button class="xbtn" style="width:42px">AC</button><button class="xbtn" style="width:40px">0</button><button class="xbtn on" style="width:44px">DC</button><button class="xbtn" style="width:37px">-</button><input class="dotty ms-auto" type="radio" checked disabled aria-label="通道 B 端子"></div>
    </fieldset>
    <fieldset class="group flex-fill me-1"><legend>触发</legend>
      <div class="line"><span style="width:40px">边沿</span><button class="edgebtn on" aria-label="上升沿"><svg width="10" height="10" fill="none" stroke="#000"><path d="M0 9h5V1h5M2 5h6"/></svg></button><button class="edgebtn me-1" aria-label="下降沿"><svg width="10" height="10" fill="none" stroke="#000"><path d="M0 1h5v8h5M2 5h6"/></svg></button><button class="xbtn on me-1" style="width:40px">A</button><button class="xbtn me-1" style="width:40px" disabled>B</button><button class="xbtn flex-fill" style="font-size:12px" disabled>外部</button></div>
      <div class="line"><label for="lv" style="width:40px">电平</label><input class="fieldy flex-fill" id="lv" value="0"><input class="fieldy text-center" style="width:30px" value="V" aria-label="单位"></div>
      <div class="line gap-1"><span style="width:28px">类型</span><button class="xbtn" style="width:57px">正弦</button><button class="xbtn" style="width:48px">标准</button><button class="xbtn" style="width:48px">自动</button><button class="xbtn" style="width:40px">无</button></div>
    </fieldset>
  </div>
</section>

<section class="alert-win" role="alertdialog" aria-label="仿真错误">
  <div class="alert-title d-flex align-items-center"><span class="flex-fill">仿真错误</span><button class="xp-close hot" aria-label="关闭"><svg width="16" height="16"><use href="#ex"/></svg></button></div>
  <div class="d-flex ps-2 flex-fill"><svg width="38" height="46"><path d="M22 15l14 27-2 3H8z" fill="#222"/><path d="M19 14q2-1 3 1l12 26q0 3-2 3H7q-3-1-1-4z" fill="#ffe81a" stroke="#c9a800"/><path d="M18 22h5l-1 13h-3z"/><circle cx="20" cy="39" r="2"/></svg><div class="alert-msg">A simulation error has occurred.  Would you like to run the Convergence Assistant to attempt to resolve this problem automatically?</div></div>
  <div class="alert-btns d-flex justify-content-center gap-2"><button class="xbtn focus">是(<u>Y</u>)</button><button class="xbtn">否(<u>N</u>)</button></div>
  <svg class="position-absolute bottom-0 end-0" width="13" height="13"><path d="M9 1h3v3H9zM5 5h3v3H5zM9 5h3v3H9zM1 9h3v3H1zM5 9h3v3H5zM9 9h3v3H9z" fill="#b8b4a2" stroke="#ece9d8"/></svg>
</section>

<div class="sitemark"><b>矿石收音机</b><a href="#">www.crystalradio.cn</a></div>
<script src="https://cdn.jsdelivr.net/npm/bootstrap@5.3.0/dist/js/bootstrap.bundle.min.js"></script>
</body>
</html>
